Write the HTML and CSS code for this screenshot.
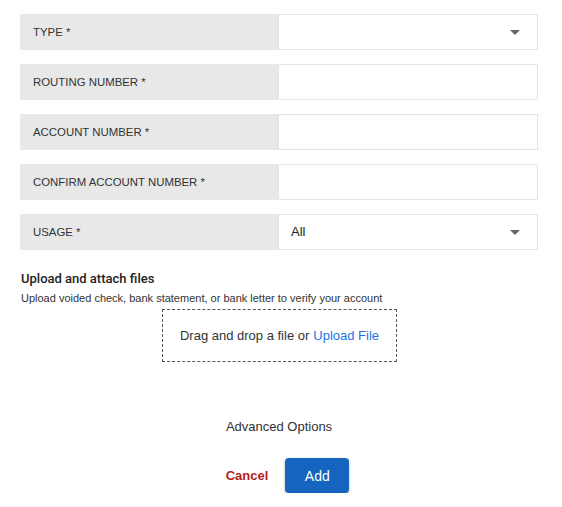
FILE: index.html
```html
<!DOCTYPE html>
<html>
<head>
<meta charset="utf-8">
<link rel="stylesheet" href="styles.css">
</head>
<body>
<div class="form">
  <div class="row">
    <div class="label">TYPE *</div>
    <div class="field select"><span class="value"></span><span class="caret"></span></div>
  </div>
  <div class="row">
    <div class="label">ROUTING NUMBER *</div>
    <div class="field"></div>
  </div>
  <div class="row">
    <div class="label">ACCOUNT NUMBER *</div>
    <div class="field"></div>
  </div>
  <div class="row">
    <div class="label">CONFIRM ACCOUNT NUMBER *</div>
    <div class="field"></div>
  </div>
  <div class="row">
    <div class="label">USAGE *</div>
    <div class="field select"><span class="value">All</span><span class="caret"></span></div>
  </div>

  <div class="upload">
    <div class="upload-title">Upload and attach files</div>
    <div class="upload-sub">Upload voided check, bank statement, or bank letter to verify your account</div>
    <div class="dropzone">Drag and drop a file or <span class="link">Upload File</span></div>
  </div>

  <div class="advanced">Advanced Options</div>

  <div class="actions">
    <span class="cancel">Cancel</span>
    <span class="add">Add</span>
  </div>
</div>
</body>
</html>
```
FILE: styles.css
```css
html, body {
  margin: 0;
  padding: 0;
  background: #ffffff;
}
body {
  font-family: "Liberation Sans", Arial, Helvetica, sans-serif;
  color: #333333;
}
.form {
  width: 518px;
  padding: 14px 0 0 20px;
}
.row {
  display: flex;
  height: 36px;
  margin-bottom: 14px;
}
.label {
  width: 258px;
  background: #e8e8e8;
  display: flex;
  align-items: center;
  padding-left: 13px;
  box-sizing: border-box;
  font-size: 11.4px;
  color: #333333;
}
.field {
  flex: 1;
  border: 1px solid #e4e4e4;
  background: #ffffff;
  display: flex;
  align-items: center;
  padding: 0 17px 0 12px;
  font-size: 13px;
  color: #222222;
}
.value {
  flex: 1;
  padding-bottom: 1px;
}
.caret {
  width: 0;
  height: 0;
  border-left: 5px solid transparent;
  border-right: 5px solid transparent;
  border-top: 5px solid #666666;
}
.upload {
  margin-top: 21px;
}
.upload-title {
  font-family: Roboto, "Liberation Sans", Arial, sans-serif;
  font-size: 13px;
  font-weight: 500;
  color: #222222;
  line-height: 16px;
  padding-left: 1px;
}
.upload-sub {
  font-size: 11px;
  color: #333333;
  line-height: 14px;
  margin-top: 4px;
  padding-left: 1px;
}
.dropzone {
  width: 235px;
  height: 53px;
  box-sizing: border-box;
  margin: 4px auto 0;
  border: 1px dashed #555555;
  display: flex;
  align-items: center;
  justify-content: center;
  font-size: 13px;
  color: #333333;
  position: relative;
  left: 0.5px;
}
.link {
  color: #1a73e8;
  margin-left: 4px;
}
.advanced {
  text-align: center;
  font-size: 13px;
  color: #333333;
  margin-top: 57px;
  line-height: 16px;
}
.actions {
  display: flex;
  justify-content: center;
  align-items: center;
  gap: 17px;
  margin-top: 23px;
  padding-left: 17px;
}
.cancel {
  color: #b71c1c;
  font-size: 13px;
  font-weight: bold;
  padding-bottom: 1px;
}
.add {
  width: 64px;
  height: 35px;
  background: #1565c0;
  color: #ffffff;
  border-radius: 4px;
  display: flex;
  align-items: center;
  justify-content: center;
  font-size: 14px;
  box-shadow: 0 1px 3px rgba(0,0,0,0.3);
}
```
